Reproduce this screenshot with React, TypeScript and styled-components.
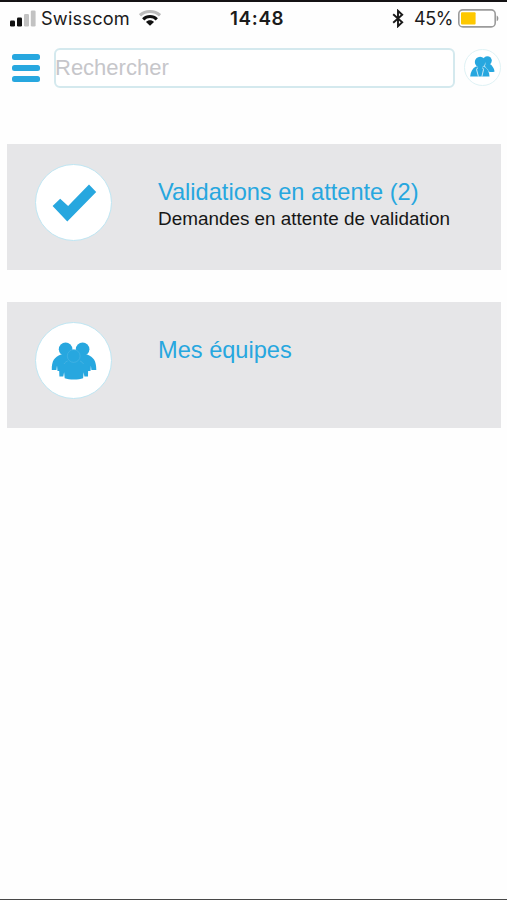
import React from 'react';
import styled, { createGlobalStyle } from 'styled-components';

const BLUE = '#27a7df';

const GlobalStyle = createGlobalStyle`
  * { box-sizing: border-box; }
  body { margin: 0; background: #fefefe; font-family: "Liberation Sans", Arial, sans-serif; }
  svg { display: block; flex: none; }
`;

const Screen = styled.div`
  display: flex;
  flex-direction: column;
  width: 507px;
  height: 900px;
  overflow: hidden;
  border-top: 2px solid #141214;
  border-bottom: 1px solid #484848;
  background: #fefefe;
`;

const StatusBar = styled.div`
  display: grid;
  grid-template-columns: 220px auto 1fr;
  align-items: center;
  height: 32px;
  padding: 0 8px 0 10px;
  font-family: Inter, sans-serif;
  font-size: 18px;
  line-height: 32px;
  color: #1b1b1b;
`;

const StatusGroup = styled.div<{ $end?: boolean }>`
  display: flex;
  align-items: center;
  justify-content: ${(p) => (p.$end ? 'flex-end' : 'flex-start')};
`;

const Carrier = styled.span`
  margin: 0 9px 0 5px;
  font-size: 18.2px;
  letter-spacing: 0.2px;
`;

const Clock = styled.span`
  padding-top: 2px;
  font-size: 18.8px;
  line-height: 30px;
  font-weight: 600;
  letter-spacing: 0.65px;
`;

const Percent = styled.span`
  margin: 0 5px 0 10px;
  padding-top: 2px;
  font-size: 18px;
  line-height: 30px;
  letter-spacing: -0.4px;
`;

const Toolbar = styled.header`
  display: flex;
  align-items: center;
  height: 40px;
  margin-top: 14px;
  padding: 0 6px 0 12px;
`;

const MenuButton = styled.button`
  display: flex;
  flex-direction: column;
  justify-content: space-between;
  width: 28px;
  height: 28px;
  margin-right: 14px;
  padding: 0;
  border: 0;
  background: none;
`;

const MenuLine = styled.span`
  height: 6px;
  border-radius: 2.5px;
  background: ${BLUE};
`;

const Search = styled.input`
  width: 401px;
  height: 40px;
  padding: 0;
  border: 2px solid #d4e9ee;
  border-radius: 6px;
  outline: none;
  background: #fff;
  font-family: inherit;
  font-size: 22px;
  text-indent: -1px;
  &::placeholder { color: #c6c6ca; opacity: 1; }
`;

const Disc = styled.div<{ $size: number }>`
  display: flex;
  align-items: center;
  justify-content: center;
  flex: none;
  width: ${(p) => p.$size}px;
  height: ${(p) => p.$size}px;
  border: 1px solid #bfe6f3;
  border-radius: 50%;
  background: #fff;
`;

const ProfileDisc = styled(Disc)`
  margin: 0 0 2px auto;
  border-color: #dff2f5;
`;

const CardList = styled.main`
  display: flex;
  flex-direction: column;
  gap: 32px;
  margin: 56px 6.5px 0 7px;
`;

const Card = styled.section`
  display: flex;
  height: 126px;
  padding: 20px 0 0 28px;
  background: #e6e6e8;
`;

const CardText = styled.div`
  margin: 14px 0 0 46px;
  white-space: nowrap;
`;

const Title = styled.h2`
  margin: 0;
  font-size: 23.6px;
  font-weight: 400;
  line-height: 29px;
  color: ${BLUE};
`;

const Subtitle = styled.p`
  margin: 0;
  font-size: 18.9px;
  line-height: 23px;
  color: #161616;
`;

const SignalIcon = () => (
  <svg width="26" height="17" viewBox="0 0 26 17">
    <rect x="0" y="10.5" width="5" height="6" rx="1.3" fill="#111" />
    <rect x="7" y="7.5" width="5" height="9" rx="1.3" fill="#111" />
    <rect x="14" y="4" width="5" height="12.5" rx="1.3" fill="#c2c2c2" />
    <rect x="20.8" y="0.5" width="4.8" height="16" rx="1.3" fill="#c2c2c2" />
  </svg>
);

const WifiIcon = () => (
  <svg width="22" height="17" viewBox="0 0 22 17" fill="none" strokeWidth="3.1">
    <path d="M1 5.3C6.6.3 15.4.3 21 5.3" stroke="#bcbcbc" />
    <path d="M4.2 9.3c3.8-3.7 9.8-3.7 13.6 0" stroke="#111" />
    <path d="M11 15.8l-4-3.8c2-2.2 6-2.2 8 0z" fill="#111" />
  </svg>
);

const BluetoothIcon = () => (
  <svg width="12" height="19" viewBox="0 0 12 19" fill="none" stroke="#191919" strokeWidth="1.9">
    <path d="M1.2 5.2l9 8.1L6 17.2V1.8l4.2 3.9-9 8.1" />
  </svg>
);

const BatteryIcon = () => (
  <svg width="41" height="19" viewBox="0 0 41 19">
    <rect x="0.8" y="0.9" width="36.4" height="17" rx="4" fill="#fff" stroke="#9b9b9b" strokeWidth="1.6" />
    <rect x="3" y="3.2" width="14.6" height="12.4" rx="1" fill="#fec800" />
    <path d="M38.7 6.5c2.2.8 2.2 5 0 5.8z" fill="#929292" />
  </svg>
);

const PairIcon = () => (
  <svg width="25" height="25" viewBox="0 0 25 25" fill={BLUE}>
    <circle cx="17.4" cy="5.6" r="4.4" />
    <path d="M14 9.5l5.5-.7c2.7 1.5 4.5 4.3 5.1 7.6-1.7.9-4 .9-6.4.1z" />
    <path d="M.2 21.4c.3-4.7 2.2-8.3 5.9-10h8.2c3.3 1.6 5 5.3 5.2 10z" />
    <circle cx="10.1" cy="7.1" r="5.3" />
    <path d="M7.6 12.6l-1 2.1 1.8 6.8M12.6 12.6l.9 2.1-1.6 6.8" fill="none" stroke="#fff" strokeWidth="0.75" />
    <path d="M15.5 7.7c-.3 2-.8 3-1.6 3.8 2.7 1.3 4.4 3.2 5.2 6.2" fill="none" stroke="#a8dcf2" strokeWidth="0.6" />
  </svg>
);

const CheckIcon = () => (
  <svg width="46" height="38" viewBox="0 0 46 38">
    <path d="M1.6 22l7.6-7.2 7.9 7.1L38 .5l7.2 7.6-28.9 29.4z" fill={BLUE} />
  </svg>
);

const TeamIcon = () => (
  <svg width="46" height="38" viewBox="0 0 46 38" fill={BLUE}>
    <circle cx="14.6" cy="7.2" r="6.8" />
    <circle cx="31.6" cy="7.2" r="6.8" />
    <path d="M10 12.6h26c6.7 2.5 9.4 6.6 9.3 15.4h-4.9l-.5-4.5-.4 5.5H6.5L6 23.5 5.4 28H.8C.6 19.2 3.3 15.1 10 12.6z" />
    <path d="M8 24h29.2l-.2 10.5h-3.6l-.7-4.3-.6 6c-4.5 1.7-14 1.7-18.4 0l-.6-6-.8 4.3H8.4z" />
    <path d="M13 22c1-1.5 2-2.3 3.6-3M29 19c1.6.7 2.6 1.5 3.5 3" fill="none" stroke="#56b9e4" strokeWidth="0.6" />
    <circle cx="22.7" cy="14" r="6.4" stroke="#56b9e4" strokeWidth="0.5" />
  </svg>
);

const items = [
  { title: 'Validations en attente (2)', subtitle: 'Demandes en attente de validation', icon: <CheckIcon /> },
  { title: 'Mes équipes', icon: <TeamIcon /> },
];

export default function App() {
  return (
    <Screen>
      <GlobalStyle />
      <StatusBar>
        <StatusGroup>
          <SignalIcon />
          <Carrier>Swisscom</Carrier>
          <WifiIcon />
        </StatusGroup>
        <Clock>14:48</Clock>
        <StatusGroup $end>
          <BluetoothIcon />
          <Percent>45%</Percent>
          <BatteryIcon />
        </StatusGroup>
      </StatusBar>
      <Toolbar>
        <MenuButton aria-label="Menu">
          <MenuLine />
          <MenuLine />
          <MenuLine />
        </MenuButton>
        <Search placeholder="Rechercher" />
        <ProfileDisc $size={37}>
          <PairIcon />
        </ProfileDisc>
      </Toolbar>
      <CardList>
        {items.map((item) => (
          <Card key={item.title}>
            <Disc $size={77}>{item.icon}</Disc>
            <CardText>
              <Title>{item.title}</Title>
              {item.subtitle && <Subtitle>{item.subtitle}</Subtitle>}
            </CardText>
          </Card>
        ))}
      </CardList>
    </Screen>
  );
}
